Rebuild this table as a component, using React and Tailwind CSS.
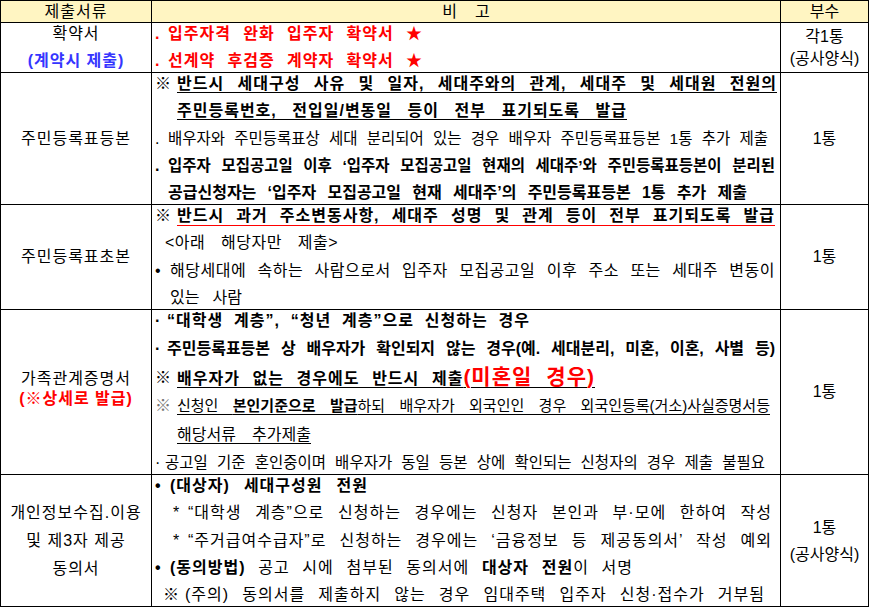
import React from "react";

const L = ({ children, className = "" }) => (
  <div className={"flex h-[20px] shrink-0 items-center leading-[20px] whitespace-pre " + className}>{children}</div>
);

const J = ({ children, className = "" }) => (
  <span className={"block shrink-0 whitespace-normal text-justify [text-align-last:justify] " + className}>{children}</span>
);

const M = ({ children, className = "" }) => (
  <span className={"block shrink-0 " + className}>{children}</span>
);

export default function App() {
  return (
    <div className="w-[869px] border-t border-l border-r border-black bg-white text-black [font-family:'Liberation_Sans','Noto_Sans_CJK_KR',sans-serif]">
      {/* header */}
      <div className="grid h-[22px] grid-cols-[151px_629px_87px] border-b border-black bg-[#fff5c2] text-[16px] leading-[20px]">
        <div className="flex items-center justify-center border-r border-black tracking-[1px]">제출서류</div>
        <div className="flex items-center justify-center gap-[18px] border-r border-black">
          <span>비</span>
          <span>고</span>
        </div>
        <div className="flex items-center justify-center">부수</div>
      </div>

      {/* row 1 */}
      <div className="grid h-[50px] grid-cols-[151px_629px_87px] border-b border-black">
        <div className="flex flex-col items-center justify-between border-r border-black py-px text-[16px] leading-[20px] tracking-[1px]">
          <div>확약서</div>
          <div className="font-bold text-[#3535ff]">(계약시 제출)</div>
        </div>
        <div className="flex flex-col justify-between border-r border-black py-px text-[16px] font-bold text-[#ff0000]">
          <L>
            <M className="ml-[3px] w-[13px]">.</M>
            <J className="w-[255px] tracking-[1px]">입주자격 완화 입주자 확약서 ★</J>
          </L>
          <L>
            <M className="ml-[3px] w-[13px]">.</M>
            <J className="w-[255px] tracking-[1px]">선계약 후검증 계약자 확약서 ★</J>
          </L>
        </div>
        <div className="flex flex-col items-center justify-center text-[16px] leading-[22px]">
          <div>각1통</div>
          <div>(공사양식)</div>
        </div>
      </div>

      {/* row 2 */}
      <div className="grid h-[132px] grid-cols-[151px_629px_87px] border-b border-black">
        <div className="flex items-center justify-center border-r border-black text-[16px] tracking-[1px]">주민등록표등본</div>
        <div className="flex flex-col justify-between border-r border-black py-px text-[16px]">
          <L className="font-bold">
            <M className="ml-[3px] w-[22px]">※</M>
            <J className="w-[600px] tracking-[1px] underline decoration-1 underline-offset-[3px]">반드시 세대구성 사유 및 일자, 세대주와의 관계, 세대주 및 세대원 전원의</J>
          </L>
          <L className="font-bold">
            <J className="ml-[25px] w-[450px] tracking-[1px] underline decoration-1 underline-offset-[3px]">주민등록번호, 전입일/변동일 등이 전부 표기되도록 발급</J>
          </L>
          <L>
            <M className="ml-[3px] w-[13px]">.</M>
            <J className="w-[600px] text-[15.5px]">배우자와 주민등록표상 세대 분리되어 있는 경우 배우자 주민등록표등본 1통 추가 제출</J>
          </L>
          <L className="font-bold">
            <M className="ml-[3px] w-[13px]">.</M>
            <J className="w-[607px] text-[15.5px]">입주자 모집공고일 이후 ‘입주자 모집공고일 현재의 세대주’와 주민등록표등본이 분리된</J>
          </L>
          <L className="font-bold">
            <J className="ml-[16px] w-[579px]">공급신청자는 ‘입주자 모집공고일 현재 세대주’의 주민등록표등본 1통 추가 제출</J>
          </L>
        </div>
        <div className="flex items-center justify-center text-[16px]">1통</div>
      </div>

      {/* row 3 */}
      <div className="grid h-[105px] grid-cols-[151px_629px_87px] border-b border-black">
        <div className="flex items-center justify-center border-r border-black text-[16px] tracking-[1px]">주민등록표초본</div>
        <div className="flex flex-col justify-between border-r border-black py-px text-[16px]">
          <L className="font-bold">
            <M className="ml-[3px] w-[22px]">※</M>
            <J className="w-[598px] tracking-[1px] underline decoration-[#ff0000] decoration-1 underline-offset-[4px]">반드시 과거 주소변동사항, 세대주 성명 및 관계 등이 전부 표기되도록 발급</J>
          </L>
          <L>
            <J className="ml-[13px] w-[173px] tracking-[0.5px]">&lt;아래 해당자만 제출&gt;</J>
          </L>
          <L>
            <M className="ml-[3px] w-[15px]">•</M>
            <J className="w-[605px] tracking-[0.5px]">해당세대에 속하는 사람으로서 입주자 모집공고일 이후 주소 또는 세대주 변동이</J>
          </L>
          <L>
            <J className="ml-[18px] w-[72px]">있는 사람</J>
          </L>
        </div>
        <div className="flex items-center justify-center text-[16px]">1통</div>
      </div>

      {/* row 4 */}
      <div className="grid h-[165px] grid-cols-[151px_629px_87px] border-b border-black">
        <div className="flex flex-col items-center justify-center border-r border-black pb-[7px] text-[16px] leading-[20px] tracking-[1px]">
          <div>가족관계증명서</div>
          <div className="font-bold text-[#ff0000]">(※상세로 발급)</div>
        </div>
        <div className="flex flex-col justify-between border-r border-black py-px text-[16px]">
          <L className="font-bold">
            <M className="ml-[3px] w-[12px]">·</M>
            <J className="w-[363px] tracking-[1px]">“대학생 계층”, “청년 계층”으로 신청하는 경우</J>
          </L>
          <L className="font-bold">
            <M className="ml-[3px] w-[12px]">·</M>
            <J className="w-[608px]">주민등록표등본 상 배우자가 확인되지 않는 경우(예. 세대분리, 미혼, 이혼, 사별 등)</J>
          </L>
          <L className="font-bold">
            <M className="ml-[3px] w-[22px]">※</M>
            <J className="w-[418px] tracking-[1px] underline decoration-black decoration-1 underline-offset-[3px]">
              배우자가 없는 경우에도 반드시 제출<span className="text-[21px] text-[#ff0000]">(미혼일 경우)</span>
            </J>
          </L>
          <L>
            <M className="ml-[3px] w-[22px] text-[#777]">※</M>
            <J className="w-[593px] text-[15px] underline decoration-1 underline-offset-[3px]">
              신청인 <b>본인기준으로 발급</b>하되 배우자가 외국인인 경우 외국인등록(거소)사실증명서등
            </J>
          </L>
          <L>
            <J className="ml-[25px] w-[134px] underline decoration-1 underline-offset-[3px]">해당서류 추가제출</J>
          </L>
          <L>
            <M className="ml-[3px] w-[10px]">·</M>
            <J className="w-[600px] text-[15.5px]">공고일 기준 혼인중이며 배우자가 동일 등본 상에 확인되는 신청자의 경우 제출 불필요</J>
          </L>
        </div>
        <div className="flex items-center justify-center text-[16px]">1통</div>
      </div>

      {/* row 5 */}
      <div className="grid h-[132px] grid-cols-[151px_629px_87px] border-b border-black">
        <div className="flex flex-col items-center justify-center border-r border-black text-[16px] leading-[28px] tracking-[1px]">
          <div>개인정보수집.이용</div>
          <div>및 제3자 제공</div>
          <div>동의서</div>
        </div>
        <div className="flex flex-col justify-between border-r border-black py-px text-[16px]">
          <L className="font-bold">
            <M className="ml-[3px] w-[15px]">•</M>
            <J className="w-[198px] tracking-[1px]">(대상자) 세대구성원 전원</J>
          </L>
          <L>
            <M className="ml-[21px] w-[15px]">*</M>
            <J className="w-[584px] tracking-[1px]">“대학생 계층”으로 신청하는 경우에는 신청자 본인과 부·모에 한하여 작성</J>
          </L>
          <L>
            <M className="ml-[21px] w-[15px]">*</M>
            <J className="w-[584px] tracking-[1px]">“주거급여수급자”로 신청하는 경우에는 ‘금융정보 등 제공동의서’ 작성 예외</J>
          </L>
          <L>
            <M className="ml-[3px] w-[15px] font-bold">•</M>
            <J className="w-[463px] tracking-[1px]">
              <b>(동의방법)</b> 공고 시에 첨부된 동의서에 <b>대상자 전원</b>이 서명
            </J>
          </L>
          <L>
            <M className="ml-[11px] w-[22px]">※</M>
            <J className="w-[580px] tracking-[1px]">(주의) 동의서를 제출하지 않는 경우 임대주택 입주자 신청·접수가 거부됨</J>
          </L>
        </div>
        <div className="flex flex-col items-center justify-center text-[16px] leading-[27px]">
          <div>1통</div>
          <div>(공사양식)</div>
        </div>
      </div>
    </div>
  );
}
